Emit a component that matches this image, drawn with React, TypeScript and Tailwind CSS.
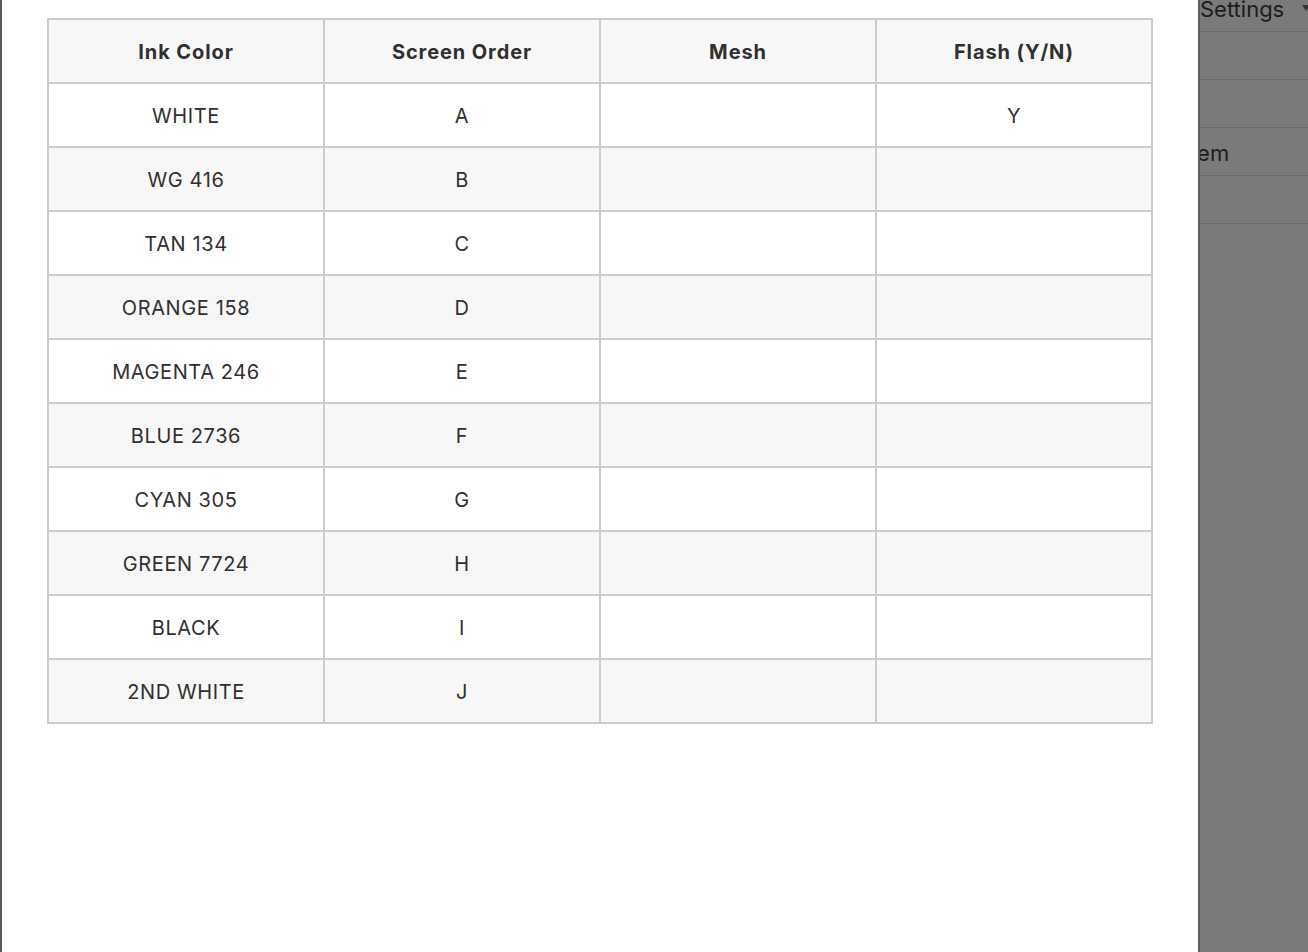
import React from "react";

const rows: [string, string, string, string][] = [
  ["WHITE", "A", "", "Y"],
  ["WG 416", "B", "", ""],
  ["TAN 134", "C", "", ""],
  ["ORANGE 158", "D", "", ""],
  ["MAGENTA 246", "E", "", ""],
  ["BLUE 2736", "F", "", ""],
  ["CYAN 305", "G", "", ""],
  ["GREEN 7724", "H", "", ""],
  ["BLACK", "I", "", ""],
  ["2ND WHITE", "J", "", ""],
];

const headers = ["Ink Color", "Screen Order", "Mesh", "Flash (Y/N)"];

export default function App() {
  return (
    <div
      className="relative flex h-[952px] w-[1308px] overflow-hidden bg-[#7a7a7a]"
      style={{ fontFamily: "Inter, 'Liberation Sans', Arial, sans-serif" }}
    >
      {/* sliver of the page behind, left side */}
      <div className="w-[2px] shrink-0 bg-[#5a5a5a]" />

      {/* modal sheet */}
      <div className="w-[1198px] shrink-0 border-r-2 border-[#5e5e5e] bg-white pl-[45px] pt-[18px]">
        <table className="w-[1106px] table-fixed border-collapse border-2 border-[#cccccc] text-center text-[20px] text-[#303030]">
          <thead>
            <tr className="h-[64px] bg-[#f7f7f7]">
              {headers.map((h) => (
                <th key={h} className="border-2 border-[#cccccc] pt-[2px] font-bold tracking-[0.9px]">
                  {h}
                </th>
              ))}
            </tr>
          </thead>
          <tbody>
            {rows.map((r, i) => (
              <tr key={r[0]} className={i % 2 === 0 ? "h-[64px] bg-white" : "h-[64px] bg-[#f7f7f7]"}>
                {r.map((c, j) => (
                  <td key={j} className="border-2 border-[#cccccc] pt-[2px] font-normal tracking-[0.6px]">
                    {c}
                  </td>
                ))}
              </tr>
            ))}
          </tbody>
        </table>
      </div>

      {/* dimmed settings panel behind the overlay */}
      <div className="relative flex-1 text-[22px] text-[#1c1c1c]">
        <div className="flex h-[32px] items-start border-b border-[#6a6a6a]">
          <span className="-mt-[7px] whitespace-nowrap">Settings</span>
          <svg className="ml-auto mt-[4px]" width="6" height="8" viewBox="0 0 6 8">
            <path d="M0 1 L8 1 L4 7 Z" fill="#333" />
          </svg>
        </div>
        <div className="h-[48px] border-b border-[#6a6a6a]" />
        <div className="h-[48px] border-b border-[#6a6a6a]" />
        <div className="flex h-[48px] items-center overflow-hidden border-b border-[#6a6a6a] pt-[3px]">
          <span className="-ml-[48px] whitespace-nowrap">System</span>
        </div>
        <div className="h-[48px] border-b border-[#6a6a6a]" />
      </div>
    </div>
  );
}
